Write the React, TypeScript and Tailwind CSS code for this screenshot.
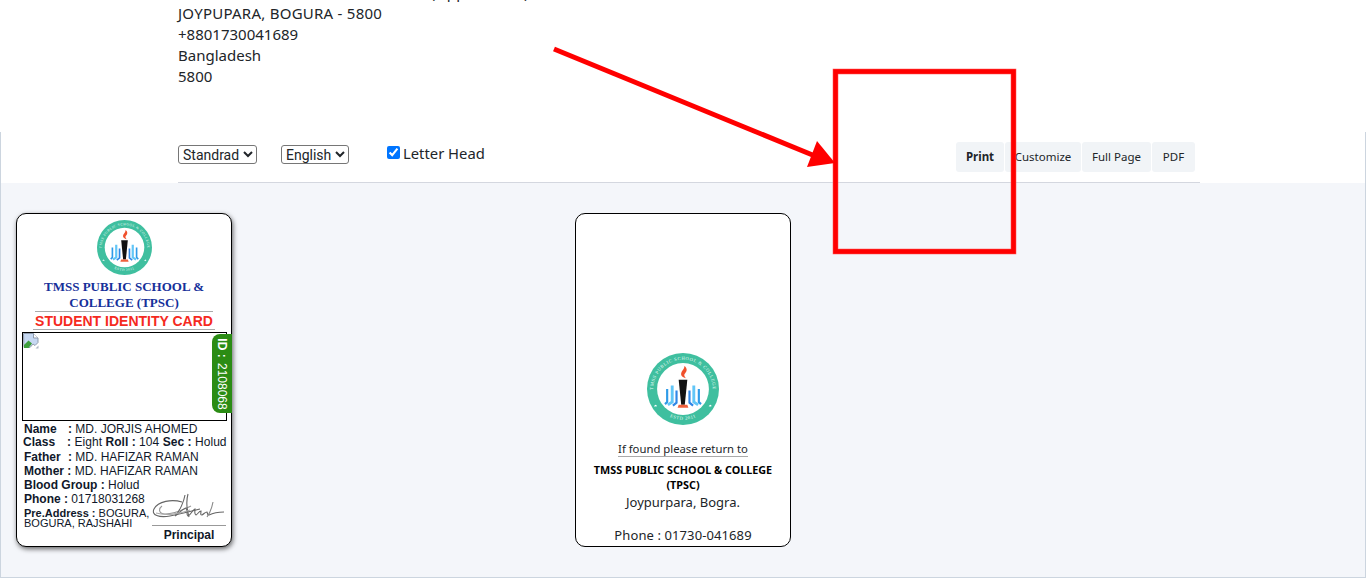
const UI_FONT = "font-['Noto_Sans',sans-serif]";

function Logo({ size, id }: { size: number; id: string }) {
  return (
    <svg width={size} height={size} viewBox="0 0 100 100" className="block">
      <circle cx="50" cy="50" r="50" fill="#3fbf9f" />
      <circle cx="50" cy="50" r="36" fill="#fff" />
      <defs>
        <path id={`${id}-top`} d="M 10 62 A 41.500 41.500 0 1 1 90 62" />
        <path id={`${id}-bot`} d="M 28 87 A 45 45 0 0 0 72 87" />
      </defs>
      <text fill="#e6fbf5" fontSize="6.400" fontFamily="'Liberation Serif', serif" letterSpacing="0.9">
        <textPath href={`#${id}-top`} startOffset="50%" textAnchor="middle">
          TMSS PUBLIC SCHOOL &amp; COLLEGE
        </textPath>
      </text>
      <text fill="#e6fbf5" fontSize="6.500" fontFamily="'Liberation Serif', serif" letterSpacing="0.8">
        <textPath href={`#${id}-bot`} startOffset="50%" textAnchor="middle">
          ESTD 2011
        </textPath>
      </text>
      <path d="M12 72l1.600 1-.6 1.800-1.600-1-1.600 1 .6-1.800z M88 72l1.600 1-.6 1.800-1.600-1-1.600 1 .6-1.800z" fill="#fff" />
      {/* flame */}
      <path d="M52 18c4 3 4 7 1 10-2 2-1.500 4 1 7-5-1-8-4-6-8.500 1-2.500 4-4.500 4-8.500z" fill="#f0502c" />
      {/* torch */}
      <path d="M44 37h12l-3.500 35h-5z" fill="#111" />
      <path d="M44 72h12l1.500 4h-15z" fill="#f0603c" />
      {/* open book */}
      <g fill="none" strokeLinecap="butt">
        <path d="M41 52v17l-5 4" stroke="#2f86e6" strokeWidth="3" />
        <path d="M35 45v23l-6 4" stroke="#62c6f7" strokeWidth="4" />
        <path d="M28 50v18l-3 3" stroke="#2f9be8" strokeWidth="3" />
        <path d="M59 52v17l5 4" stroke="#2f86e6" strokeWidth="3" />
        <path d="M65 45v23l6 4" stroke="#62c6f7" strokeWidth="4" />
        <path d="M72 50v18l3 3" stroke="#2f9be8" strokeWidth="3" />
      </g>
    </svg>
  );
}

function BrokenImage() {
  return (
    <svg width="16" height="16" viewBox="0 0 16 16" className="block">
      <path d="M.5.500h10l4.500 4.500v4.500l-3 3-2-1.500-3 3.500h-6z" fill="#c6d8f2" stroke="#8f9bad" />
      <path d="M10.500.500v4.500h4.500" fill="#fff" stroke="#8f9bad" />
      <path d="M1 15v-3l4.500-4.500 3.500 3-3.500 4.500z" fill="#3f9f3c" />
      <path d="M12.500 15.500l3-3v3z" fill="#aeb8c6" />
    </svg>
  );
}

function Signature() {
  return (
    <svg width="76" height="32" viewBox="0 0 76 32" className="block blur-[0.3px]" fill="none" stroke="#666" strokeWidth="1.100">
      <path d="M30 9c-10-3-24-1-28 7-3 6 5 9 16 7 10-2 22-5 30-7" />
      <path d="M10 13c-4 3-3 8 3 8 10 0 20-5 26-8" stroke="#999" />
      <path d="M33 2c-1 6-5 16-10 21 4-2 8-8 11-8 2 3 0 7 2 8 3-1 4-6 7-7 0 3-1 5 1 6 2-1 3-4 5-4 0 2-1 4 1 4 2-1 3-3 5-3 1 2 0 3 2 3 4-2 9-3 15-3" />
      <path d="M36 1c-2 7-1 16 1 23" />
      <path d="M61 9c-1 5-3 11-6 15" stroke="#888" />
      <path d="M4 20c10 3 24 1 34-3" stroke="#aaa" />
    </svg>
  );
}

function Label({ children }: { children: React.ReactNode }) {
  return <b className="inline-block w-[44px]">{children}</b>;
}

function IdCardFront() {
  return (
    <div className="relative w-[216px] h-[334px] bg-white border border-black rounded-[10px] shadow-[1px_2px_5px_rgba(0,0,0,0.6)] font-['Liberation_Sans',sans-serif] text-[#10182a]">
      <div className="flex justify-center pt-[6px] pl-[1px]">
        <Logo size={55} id="front" />
      </div>
      <div className="mt-[4px] text-center font-['Liberation_Serif',serif] font-bold text-[13px] leading-[16px] text-[#16309a]">
        TMSS PUBLIC SCHOOL &amp;<br />COLLEGE (TPSC)
      </div>
      <div className="mx-[18px] border-t border-[#aaa]"></div>
      <div className="mx-[16px] h-[18px] text-center whitespace-nowrap font-bold text-[14px] leading-[18px] text-[#f52a1e] border-b border-[#aaa]">
        STUDENT IDENTITY CARD
      </div>
      <div className="ml-[5px] mt-[2px] w-[205px] h-[89px] border border-black">
        <BrokenImage />
      </div>
      <div className="absolute -right-px top-[120px] w-[20px] h-[79px] bg-[#2b8c14] rounded-l-[8px] flex items-center justify-center">
        <span className="rotate-90 whitespace-nowrap text-white text-[12px]">
          <b className="mr-[2px]">ID :</b> 2108068
        </span>
      </div>
      <div className="ml-[7px] mt-[1px] text-[12px]">
        <div className="h-[14px] leading-[14px]"><Label>Name</Label><b>:</b> MD. JORJIS AHOMED</div>
        <div className="h-[14px] leading-[13px] -ml-[1px] whitespace-nowrap tracking-[0.05px]"><Label>Class</Label><b>:</b> Eight <b>Roll :</b> 104 <b>Sec :</b> Holud</div>
        <div className="h-[14px] leading-[14px]"><Label>Father</Label><b>:</b> MD. HAFIZAR RAMAN</div>
        <div className="h-[14px] leading-[14px]"><b>Mother :</b> MD. HAFIZAR RAMAN</div>
        <div className="h-[14px] leading-[14px]"><b>Blood Group :</b> Holud</div>
        <div className="h-[14px] leading-[14px]"><b>Phone :</b> 01718031268</div>
        <div className="w-[130px] text-[11px] leading-[10px] mt-[2px]"><b>Pre.Address :</b> BOGURA, BOGURA, RAJSHAHI</div>
      </div>
      <div className="absolute right-[5px] bottom-[3px] w-[74px] text-center">
        <Signature />
        <div className="border-t border-[#999] text-[12px] font-bold leading-[16px] pt-[1px]">Principal</div>
      </div>
    </div>
  );
}

function IdCardBack() {
  return (
    <div className={`w-[216px] h-[334px] bg-white border border-black rounded-[10px] flex flex-col items-center pt-[139px] text-center text-[#212529] ${UI_FONT}`}>
      <Logo size={72} id="back" />
      <div className="mt-[17px] w-[130px] border-b border-[#aaa] text-[11.300px] leading-[14px] whitespace-nowrap">If found please return to</div>
      <div className="mt-[5px] font-bold text-[10.800px] leading-[15px] text-black whitespace-nowrap">
        TMSS PUBLIC SCHOOL &amp; COLLEGE<br />(TPSC)
      </div>
      <div className="text-[13px] leading-[18px] mt-[1px]">Joypurpara, Bogra.</div>
      <div className="text-[13px] leading-[18px] mt-[15px] tracking-[0.1px]">Phone : 01730-041689</div>
    </div>
  );
}

function Toolbar() {
  return (
    <div className={`ml-[177px] mr-[165px] h-[51px] flex border-b border-[#d4d7df] text-[#212529] ${UI_FONT}`}>
      <select defaultValue="Standrad" className="mt-[13px] h-[19px] w-[79px] border border-[#767676] rounded-[3px] font-['Roboto',sans-serif] text-[14px] text-[#212529] bg-white">
        <option>Standrad</option>
      </select>
      <select defaultValue="English" className="ml-[24px] mt-[13px] h-[19px] w-[68px] border border-[#767676] rounded-[3px] font-['Roboto',sans-serif] text-[14px] text-[#212529] bg-white">
        <option>English</option>
      </select>
      <label className="ml-[38px] mt-[9px] h-[24px] flex items-center text-[14.800px] leading-[24px]">
        <input type="checkbox" defaultChecked className="w-[13px] h-[13px] mr-[3px] -mt-[1px]" />
        Letter Head
      </label>
      <div className="ml-auto mr-[5px] mt-[10px] flex gap-[1px] text-[11.500px] text-[#212529]">
        <span className="h-[30px] w-[48px] bg-[#f1f4f7] rounded-[3px] flex items-center justify-center font-bold">Print</span>
        <span className="h-[30px] w-[76px] bg-[#f1f4f7] rounded-[3px] flex items-center justify-center">Customize</span>
        <span className="h-[30px] w-[69px] bg-[#f1f4f7] rounded-[3px] flex items-center justify-center">Full Page</span>
        <span className="h-[30px] w-[43px] bg-[#f1f4f7] rounded-[3px] flex items-center justify-center">PDF</span>
      </div>
    </div>
  );
}

export default function App() {
  return (
    <div className="relative h-[578px] overflow-hidden bg-white">
      {/* address, top line is scrolled off */}
      <div className={`pl-[178px] -mt-[18px] h-[150px] text-[15px] leading-[21px] text-[#212529] ${UI_FONT}`}>
        <div className="whitespace-nowrap tracking-[0.25px]">TMSS PUBLIC SCHOOL &amp; COLLEGE (Upper Block)</div>
        <div className="tracking-[0.25px]">JOYPUPARA, BOGURA - 5800</div>
        <div>+8801730041689</div>
        <div>Bangladesh</div>
        <div>5800</div>
      </div>

      <div className="h-[446px] flex flex-col border-x border-b border-[#ccd5df]">
        <Toolbar />
        <div className="flex-1 bg-[#f4f6fa] pl-[15px] pt-[30px] flex">
          <div className="w-[559px]">
            <IdCardFront />
          </div>
          <IdCardBack />
        </div>
      </div>

      {/* red annotation drawn over the screenshot */}
      <svg width="1366" height="578" className="absolute inset-0 pointer-events-none">
        <rect x="835.500" y="71.500" width="178" height="180" fill="none" stroke="#ff6a6a" strokeWidth="5.600" />
        <rect x="835.500" y="71.500" width="178" height="180" fill="none" stroke="#ff0000" strokeWidth="4.600" />
        <line x1="554" y1="49" x2="815" y2="156" stroke="#ff0000" strokeWidth="5" />
        <polygon points="817,141 835,163 807,167" fill="#ff0000" />
      </svg>
    </div>
  );
}
